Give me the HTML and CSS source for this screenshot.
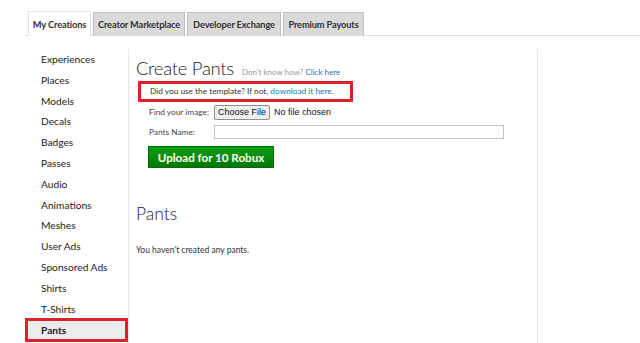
FILE: index.html
```html
<!DOCTYPE html>
<html>
<head>
<meta charset="utf-8">
<link rel="stylesheet" href="styles.css">
</head>
<body>
<div class="page">
  <div class="tabs">
    <div class="tab active">My Creations</div>
    <div class="tab">Creator Marketplace</div>
    <div class="tab">Developer Exchange</div>
    <div class="tab">Premium Payouts</div>
  </div>
  <div class="main">
    <ul class="sidebar">
      <li>Experiences</li>
      <li>Places</li>
      <li>Models</li>
      <li>Decals</li>
      <li>Badges</li>
      <li>Passes</li>
      <li>Audio</li>
      <li>Animations</li>
      <li>Meshes</li>
      <li>User Ads</li>
      <li>Sponsored Ads</li>
      <li>Shirts</li>
      <li>T-Shirts</li>
      <li class="selected">Pants</li>
    </ul>
    <div class="content">
      <div class="title-row">
        <h1 class="title">Create Pants</h1>
        <span class="help">Don't know how? <a class="link">Click here</a></span>
      </div>
      <div class="template-note">Did you use the template? If not, <a class="link">download it here.</a></div>
      <div class="form-row first">
        <span class="label">Find your image:</span>
        <span class="file-btn">Choose File</span>
        <span class="file-state">No file chosen</span>
      </div>
      <div class="form-row">
        <span class="label">Pants Name:</span>
        <span class="name-input"></span>
      </div>
      <div class="upload">Upload for 10 Robux</div>
      <h2 class="section-title">Pants</h2>
      <p class="empty">You haven't created any pants.</p>
    </div>
    <div class="aside"></div>
  </div>
</div>
</body>
</html>
```

FILE: styles.css
```css
* { box-sizing: border-box; }
html, body { margin: 0; padding: 0; background: #fff; }
body { font-family: Lato, "Open Sans", sans-serif; color: #222; width: 640px; height: 343px; overflow: hidden; }
.page { padding-left: 25px; }
.tabs { display: flex; gap: 2px; margin-top: 11px; padding-left: 3px; border-bottom: 1px solid #dcdcdc; height: 25px; }
.tab { height: 24px; margin-top: 1px; font-size: 9.3px; font-weight: 700; letter-spacing: -0.15px; color: #333; background: #dadada; border: 1px solid #bdbdbd; border-bottom: none; display: flex; align-items: center; justify-content: center; white-space: nowrap; }
.tab:nth-child(1) { width: 63px; }
.tab:nth-child(2) { width: 92px; }
.tab:nth-child(3) { width: 94px; }
.tab:nth-child(4) { width: 81px; }
.tab.active { background: #fff; border-color: #e2e2e2; height: 25px; margin-top: 0; }
.main { display: flex; margin-top: 13px; }
.sidebar { list-style: none; margin: 0; padding: 0; width: 104px; border-right: 1px solid #e6e6e6; height: 300px; }
.sidebar li { height: 20.8px; line-height: 20.8px; padding-left: 16px; font-size: 10.2px; color: #222; }
.sidebar li.selected { background: #ececec; font-weight: 700; box-shadow: inset 0 0 0 3px #de1f2c; height: 24px; line-height: 24px; margin-top: -1px; }
.content { width: 409px; padding-left: 7px; border-right: 1px solid #e6e6e6; height: 300px; }
.title-row { display: flex; align-items: baseline; gap: 8px; margin-top: 8px; height: 24px; }
.title { margin: 0; font-size: 18.5px; font-weight: 300; letter-spacing: -0.3px; color: #222; line-height: 22px; }
.help { font-size: 8px; color: #999; }
.link { color: #1f6fbf; }
.template-note { margin-top: 0; margin-left: 2px; width: 215px; height: 21px; border: 3px solid #de1f2c; padding-left: 9px; font-size: 8.3px; line-height: 15px; color: #333; white-space: nowrap; }
.form-row { display: flex; align-items: center; margin-left: 13px; height: 16px; margin-top: 4px; font-size: 8.3px; color: #444; white-space: nowrap; }
.form-row.first { margin-top: 2px; }
.form-row .label { width: 65px; }
.file-btn { font-family: "Liberation Sans", Arial, sans-serif; font-size: 9px; color: #111; background: #efefef; border: 1px solid #8f8f8f; border-radius: 2px; padding: 0 3px; height: 15px; line-height: 13px; }
.file-state { font-family: "Liberation Sans", Arial, sans-serif; font-size: 9px; color: #111; margin-left: 4px; }
.name-input { width: 290px; height: 14px; border: 1px solid #c4c4c4; }
.upload { margin-left: 12px; margin-top: 6px; width: 126px; height: 22px; background: linear-gradient(#0f9d0f, #037903); border: 1px solid #036a03; color: #fff; font-size: 11.6px; font-weight: 700; display: flex; align-items: center; justify-content: center; }
.section-title { margin: 35px 0 0 0; font-size: 17.5px; font-weight: 300; line-height: 22px; color: #222; }
.empty { margin: 20px 0 0 0; font-size: 8.5px; color: #333; }
.aside { flex: 1; }
```
